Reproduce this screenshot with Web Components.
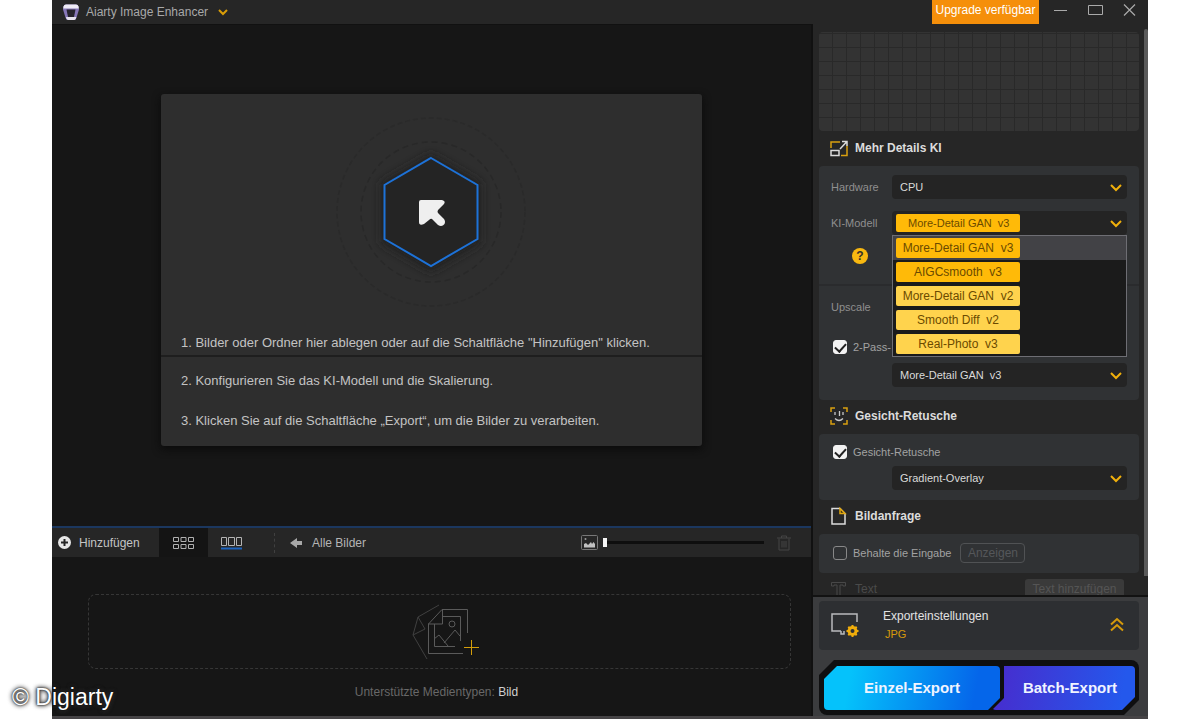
<!DOCTYPE html>
<html lang="de">
<head>
<meta charset="utf-8">
<title>Aiarty Image Enhancer</title>
<style>
  html, body { margin: 0; height: 100%; background: #fff; }
  body { font: 12px/16px "Liberation Sans", Arial, sans-serif; color: #b9b9b9; position: relative; overflow: hidden; }
</style>
</head>
<body>
<app-window></app-window>
<photo-credit>© Digiarty</photo-credit>

<script>
const define = (name, html, setup) => {
  const template = document.createElement('template');
  template.innerHTML = `<style>:host,*{box-sizing:border-box}button,select,input{font:inherit;color:inherit}button{border:0;background:none;padding:0;margin:0}svg{display:block;flex:none}</style>` + html;
  customElements.define(name, class extends HTMLElement {
    constructor() {
      super();
      this.attachShadow({ mode: 'open' }).appendChild(template.content.cloneNode(true));
    }
    connectedCallback() { if (setup) setup(this, this.shadowRoot); }
  });
};

define('photo-credit', `
<style>
  :host { position: absolute; left: 12px; bottom: 8px; font-size: 23px; line-height: 28px; color: #fff;
    text-shadow: 0 0 2px #000, 0 0 4px #222, 0 0 5px #444; }
</style><slot></slot>`);

/* Title bar */
define('title-bar', `
<style>
  :host { display: flex; align-items: center; height: 24px; padding: 0 12px 0 10px; background: #262626; }
  .logo { margin-right: 6px; }
  h1 { margin: 0 10px 0 0; font-size: 12px; font-weight: 400; color: #a9a9a9; }
  .up { margin-left: auto; height: 24px; width: 107px; padding-bottom: 4px; background: #f58f0a; color: #fff; white-space: nowrap; }
  .win { display: flex; gap: 20px; margin-left: 14px; align-items: center; padding-bottom: 4px; }
  .win button { height: 16px; }
</style>
<svg class="logo" width="18" height="18" viewBox="0 0 18 18">
  <path d="M4 1.500h10q2 0 2.500 2l.5 3-2.500 8q-.5 2.500-2.500 2.500H6q-2 0-2.500-2.500L1 6.500l.5-3Q2 1.500 4 1.500z" fill="#8676b8"/>
  <path d="M4 1.500h10q2 0 2.500 2l.3 2H1.200l.3-2Q2 1.500 4 1.500z" fill="#efebf6"/>
  <path d="M4 14h10.300q-.4 3-2.300 3H6q-1.600 0-2-3z" fill="#e6e2ef"/>
  <path d="M4.500 6.500h9L12 14H6z" fill="#26232e"/>
</svg>
<h1>Aiarty Image Enhancer</h1>
<button aria-label="Menü"><svg width="10" height="7" viewBox="0 0 10 7"><path d="M1 1l4 4 4-4" fill="none" stroke="#d99d08" stroke-width="2"/></svg></button>
<button class="up">Upgrade verfügbar</button>
<div class="win">
  <button aria-label="Minimieren"><svg width="15" height="16"><path d="M1 8.500h13" stroke="#aaa"/></svg></button>
  <button aria-label="Maximieren"><svg width="15" height="16"><path d="M.5 3.500h14v9H.5z" fill="none" stroke="#aaa"/></svg></button>
  <button aria-label="Schließen"><svg width="13" height="16"><path d="M1 2.500l11 11M12 2.500l-11 11" stroke="#aaa" stroke-width="1.200"/></svg></button>
</div>`);

/* Drop area with the three steps */
define('drop-stage', `
<style>
  :host { display: flex; justify-content: center; align-items: flex-start; flex: 1; min-height: 0; padding: 69px 16px 0; background: #161616; }
  section { width: 541px; max-width: 100%; border-radius: 3px; background: #2e2e2e; box-shadow: 0 3px 8px #0a0a0a; color: #c3c3c3; font-size: 13px; }
  .drop { padding: 18px 0 4px; border-bottom: 2px solid #1e1e1e; }
  .drop svg { margin: 0 auto 23px; }
  p { margin: 0; padding: 0 20px; }
  .steps { display: grid; gap: 24px; padding: 16px 0 17px; }
</style>
<section>
  <div class="drop">
    <svg width="200" height="200" viewBox="0 0 200 200">
      <defs><filter id="s" x="-30%" y="-30%" width="160%" height="160%"><feGaussianBlur stdDeviation="5"/></filter></defs>
      <circle cx="99" cy="100" r="94" fill="none" stroke="#2a2a2a" stroke-width="1.500" stroke-dasharray="5 3"/>
      <circle cx="99" cy="100" r="70" fill="none" stroke="#282828" stroke-width="1.500" stroke-dasharray="6 4"/>
      <path d="M99 42l50 29v60l-50 29-50-29V71z" fill="#202020" filter="url(#s)"/>
      <path d="M99 46l46.500 27v54L99 154l-46.500-27V73z" fill="#242424" stroke="#1d72d8" stroke-width="2"/>
      <path d="M89 88h21q4 1 2 4l-6 6q-1 2 0 3l6 6c3 4-1 9-6 6l-6-6q-1-1-3 1l-5 4q-5 2-5-2V90q0-2 2-2z" fill="#efefef"/>
    </svg>
    <p>1. Bilder oder Ordner hier ablegen oder auf die Schaltfläche "Hinzufügen" klicken.</p>
  </div>
  <div class="steps">
    <p>2. Konfigurieren Sie das KI-Modell und die Skalierung.</p>
    <p>3. Klicken Sie auf die Schaltfläche „Export“, um die Bilder zu verarbeiten.</p>
  </div>
</section>`);

/* Toolbar over the film strip */
define('strip-toolbar', `
<style>
  :host { display: flex; align-items: stretch; height: 31px; flex: none; border-top: 2px solid #1b375f; background: #262626; padding-right: 20px; color: #b5b5b5; }
  button { display: flex; align-items: center; }
  .add { gap: 8px; width: 107px; padding-left: 6px; color: #c4c4c4; border-radius: 0 0 6px 0; }
  .tab { width: 49px; justify-content: center; background: #141414; }
  .strip { margin-left: 13px; }
  .dots { align-self: center; height: 20px; margin: 0 15px 0 32px; border-left: 1px dashed #404040; }
  .all { gap: 9px; }
  .zoom { display: flex; align-items: center; gap: 5px; margin-left: auto; }
  input { appearance: none; width: 161px; height: 12px; margin: 0; background: linear-gradient(#0e0e0e, #0e0e0e) center / 100% 3px no-repeat; }
  input::-webkit-slider-thumb { appearance: none; width: 4px; height: 9px; background: #f4f4f4; }
  .del { margin-left: 13px; }
</style>
<button class="add"><svg width="13" height="13" viewBox="0 0 13 13"><circle cx="6.500" cy="6.500" r="6.500" fill="#e8e8e8"/><path d="M6.500 3v7M3 6.500h7" stroke="#262626" stroke-width="2"/></svg>Hinzufügen</button>
<button class="tab" aria-label="Raster"><svg width="21" height="12" viewBox="0 0 21 12"><path d="M.5.5h5v4h-5zM8 .5h5v4H8zM15.500.5h5v4h-5zM.5 7.500h5v4h-5zM8 7.500h5v4H8zM15.500 7.500h5v4h-5z" fill="none" stroke="#b0b0b0"/></svg></button>
<button class="strip" aria-label="Filmstreifen"><svg width="21" height="14" viewBox="0 0 21 14"><path d="M.5 1.500h5v8h-5zM7.500 1.500h6v8h-6zM15.500 1.500h5v8h-5z" fill="none" stroke="#b4b4b4"/><path d="M0 12.500h21" stroke="#1c63bd" stroke-width="2"/></svg></button>
<span class="dots"></span>
<button class="all"><svg width="13" height="12" viewBox="0 0 13 12"><path d="M0 6l7-5v3h5v4H7v3z" fill="#a8a8a8"/></svg>Alle Bilder</button>
<div class="zoom">
  <svg width="17" height="15" viewBox="0 0 17 15"><rect x=".5" y=".5" width="16" height="14" rx="1" fill="none" stroke="#777"/><path d="M3 12.500V9l2-1 2 2 3-3 1 2 1.500-2L14 9v3.500z" fill="#c0c0c0"/><circle cx="4.500" cy="4" r="1" fill="#999"/></svg>
  <input type="range" min="0" max="100" value="0" aria-label="Vorschaugröße">
</div>
<button class="del" aria-label="Löschen"><svg width="14" height="16" viewBox="0 0 14 16"><path d="M0 3h14M4.500 3V1h5v2M2 3.500V15h10V3.500M5 6v6.500M7 6v6.500M9 6v6.500" fill="none" stroke="#444"/></svg></button>`);

/* Empty film strip */
define('film-strip', `
<style>
  :host { display: block; height: 159px; flex: none; padding: 37px 20px 0 36px; background: #161616; }
  .box { display: flex; height: 75px; align-items: center; justify-content: center; padding-left: 10px; border: 1px dashed #363636; border-radius: 8px; }
  p { margin: 15px 0 0; padding-right: 6px; text-align: center; color: #686868; }
  b { font-weight: 400; color: #cfcfcf; }
</style>
<div class="box">
  <svg width="68" height="56" viewBox="0 0 68 56" fill="none" stroke="#5a5a5a">
    <path d="M28 1L7 13 2 31l14 24M7 13l7 12L2 31" stroke="#404040"/>
    <path d="M56.500 29V5.500H31L17.500 20v29.500H52"/><path d="M31.500 5v15H17M32 12.500h17.500V37M23.500 20v22.500H44M23 35l5-4 9 11M33 39l11-13 5 6"/><circle cx="41" cy="20" r="3"/>
    <path d="M60.500 36v15M53 43.500h15" stroke="#d49e0a"/>
  </svg>
</div>
<p>Unterstützte Medientypen: <b>Bild</b></p>`);

/* Section heading with an icon slot */
define('panel-heading', `
<style>
  :host { display: flex; align-items: center; height: 34px; padding: 0 15px 2px 11px; gap: 7px; color: #dcdcdc; }
  h2 { margin: 0; font-size: 12px; line-height: 16px; flex: 1; }
  :host([muted]) { color: #4a4a4a; } :host([muted]) h2 { font-weight: 400; }
  ::slotted(svg) { display: block; flex: none; }
</style>
<slot name="icon"></slot><h2><slot></slot></h2><slot name="end"></slot>`);

define('panel-card', `
<style>
  :host { display: flex; flex-direction: column; background: #303234; border-radius: 4px; padding: 9px 12px; font-size: 11px; }
</style><slot></slot>`);

/* Labelled drop-down; "tag" draws the value as a yellow chip */
define('select-field', `
<style>
  :host { display: grid; grid-template-columns: 61px minmax(0, 1fr); align-items: center; height: 24px; flex: none; font-size: 11px; color: #8f8f8f; position: relative; }
  .field { grid-column: 2; position: relative; height: 24px; border-radius: 4px; background: #242424; color: #dadada; }
  select { appearance: none; display: block; width: 100%; height: 24px; margin: 0; padding: 0 24px 0 8px; border: 0; background: none; position: relative; }
  .field > svg { position: absolute; right: 5px; top: 9px; pointer-events: none; }
  :host([tag]) .field::before { content: ""; position: absolute; left: 4px; top: 3px; width: 124px; height: 18px; border-radius: 2px; background: #ffba08; }
  :host([tag]) select { color: #6b4a00; padding-left: 16px; }
</style>
<label for="s"></label>
<div class="field"><select id="s"></select>
<svg width="12" height="8" viewBox="0 0 12 8"><path d="M1 1l5 5 5-5" fill="none" stroke="#f0b00c" stroke-width="2"/></svg></div>
<slot></slot>`, (host, root) => {
  const label = root.querySelector('label'), select = root.querySelector('select');
  label.textContent = host.getAttribute('label') || '';
  if (!label.textContent) select.setAttribute('aria-label', host.getAttribute('name'));
  select.replaceChildren(new Option(host.getAttribute('value').replace('  ', '\u00a0\u00a0')));
});

/* Open list of models */
define('model-menu', `
<style>
  :host { position: absolute; z-index: 2; top: 24px; left: 61px; right: 0; display: block; border: 1px solid #6e6e74; background: #1b1b1b; font-size: 12px; }
  [role=option] { display: block; width: 100%; height: 24px; padding: 1px 3px 2px; text-align: left; }
  [aria-selected=true] { background: #424246; }
  span { display: block; width: 124px; height: 20px; line-height: 20px; border-radius: 2px; background: #ffba08; color: #6b4a00; text-align: center; white-space: pre; }
  .soft { background: #ffd34d; }
</style>
<div role="listbox" aria-label="KI-Modell">
  <button role="option" aria-selected="true"><span>More-Detail GAN  v3</span></button>
  <button role="option"><span>AIGCsmooth  v3</span></button>
  <button role="option"><span class="soft">More-Detail GAN  v2</span></button>
  <button role="option"><span class="soft">Smooth Diff  v2</span></button>
  <button role="option"><span class="soft">Real-Photo  v3</span></button>
</div>`);

define('check-field', `
<style>
  :host { display: flex; align-items: center; font-size: 11px; color: #a2a2a2; height: 24px; flex: none; padding-left: 2px; }
  label { display: flex; align-items: center; gap: 6px; white-space: nowrap; }
  input { appearance: none; position: relative; width: 14px; height: 14px; margin: 0; border: 1px solid #888; border-radius: 3px; }
  input:checked { background: #f2f2f2; border-color: #f2f2f2; }
  input:checked::after { content: ""; position: absolute; left: 3px; top: 0; width: 5px; height: 9px; border: solid #222; border-width: 0 2px 2px 0; transform: rotate(42deg); }
</style>
<label><input type="checkbox"><slot></slot></label>`, (host, root) => {
  root.querySelector('input').checked = host.hasAttribute('checked');
});

/* Settings column */
define('settings-panel', `
<style>
  :host { display: flex; flex: 1; min-height: 0; overflow: hidden; background: #262626; }
  .content { flex: 1; min-width: 0; padding: 8px 5px 0 6px; }
  .preview { height: 99px; margin-bottom: 1px; border-radius: 4px; background-color: #333;
    background-image: linear-gradient(90deg, #292929 1px, transparent 1px), linear-gradient(#292929 1px, transparent 1px);
    background-size: 14px 14px; background-position: -1px 1px; }
  .bar { width: 4px; margin-top: 5px; margin-bottom: 19px; background: #5a5a5a; border-radius: 2px 2px 0 0; }
  .help { align-self: flex-start; margin: 13px 0 0 21px; width: 16px; height: 16px; border-radius: 50%; background: #f8b810; color: #33302a; font-weight: 700; font-size: 12px; line-height: 16px; }
  .line { height: 2px; margin: 20px -12px 9px; background: #2a2b2d; }
  .label { line-height: 24px; color: #8f8f8f; }
  .gap { margin-top: 12px; }
  .pass { margin-top: 16px; }
  .second { margin-top: 4px; }
  .keep { display: flex; align-items: center; gap: 9px; }
  .keep button { width: 65px; height: 20px; border: 1px solid #505254; border-radius: 4px; color: #55575a; font-size: 12px; }
  .first { height: 234px; } .face { height: 66px; padding-top: 6px; } .query { height: 39px; padding-top: 7px; }
  .mode { margin-top: 2px; }
  .text { width: 99px; height: 20px; border-radius: 3px; background: #3a3a3a; color: #555; font-size: 12px; }
</style>
<div class="content">
  <div class="preview"></div>
  <panel-heading>
    <svg slot="icon" width="18" height="17" viewBox="0 0 18 17" fill="none"><path d="M1 8V2h9M17 6v9.500h-6" stroke="#d9a010" stroke-width="1.500"/><path d="M1 10.500h8v5H1zM10 9l6.500-7M12 1.500h5v4.500" stroke="#dcdcdc" stroke-width="1.500"/></svg>
    Mehr Details KI
  </panel-heading>
  <panel-card class="first">
    <select-field label="Hardware" value="CPU"></select-field>
    <select-field class="gap" label="KI-Modell" value="More-Detail GAN  v3" tag><model-menu></model-menu></select-field>
    <button class="help" aria-label="Hilfe">?</button>
    <div class="line"></div>
    <span class="label">Upscale</span>
    <check-field class="pass" checked>2-Pass-</check-field>
    <select-field class="second" name="Modell für zweiten Durchlauf" value="More-Detail GAN  v3"></select-field>
  </panel-card>
  <panel-heading>
    <svg slot="icon" width="18" height="18" viewBox="0 0 18 18" fill="none"><path d="M1 5V1h4M13 1h4v4M1 13v4h4M13 17h4v-4" stroke="#d9a010" stroke-width="1.500"/><path d="M5 5v3M9.500 4v5M13 5v3M5 11.500q4 4 8 0" stroke="#c8c8c8" stroke-width="1.300"/></svg>
    Gesicht-Retusche
  </panel-heading>
  <panel-card class="face">
    <check-field checked>Gesicht-Retusche</check-field>
    <select-field class="mode" name="Retusche-Modus" value="Gradient-Overlay"></select-field>
  </panel-card>
  <panel-heading>
    <svg slot="icon" width="18" height="18" viewBox="0 0 18 18" fill="none"><path d="M2 1.500h8l5 5v10.500H2z" stroke="#dcdcdc" stroke-width="1.500"/><path d="M10 1.500v5h5z" fill="#332b12" stroke="#e0a610" stroke-width="1.500"/></svg>
    Bildanfrage
  </panel-heading>
  <panel-card class="query">
    <div class="keep"><check-field>Behalte die Eingabe</check-field><button>Anzeigen</button></div>
  </panel-card>
  <panel-heading muted>
    <svg slot="icon" width="18" height="17" viewBox="0 0 18 17" fill="none"><path d="M1.500 5V1.500h14V5h-2.500V4h-3v12H7V4H4v1z" stroke="#484848"/></svg>
    Text
    <button slot="end" class="text">Text hinzufügen</button>
  </panel-heading>
</div>
<div class="bar"></div>`);

/* Export footer */
define('export-footer', `
<style>
  :host { display: block; height: 121px; flex: none; padding: 4px 9px 0 6px; border-top: 2px solid #121212; background: #3b3c3e; }
  .card { display: flex; align-items: center; width: 100%; height: 49px; padding: 0 14px 2px 12px; border-radius: 4px; background: #2d2f32; text-align: left; }
  .t { flex: 1; padding-left: 24px; color: #e2e2e2; line-height: 18px; font-size: 12px; }
  .t small { display: block; padding-left: 2px; font-size: 11px; color: #d59a0b; }
  .frame { display: grid; grid-template-columns: 176fr 135fr; height: 55px; margin-top: 10px; padding: 6px 4px 5px 5px; background: #0f0f10; border-radius: 8px;
    clip-path: polygon(15px 0, 100% 0, 100% calc(100% - 15px), calc(100% - 15px) 100%, 0 100%, 0 15px); }
  .frame button { height: 44px; font-size: 15px; font-weight: 700; color: #f0f4ff; border-radius: 4px; }
  .frame .one { background: linear-gradient(100deg, #05c2fb 15%, #0566ea 85%); clip-path: polygon(13px 0, 100% 0, 100% calc(100% - 12px), calc(100% - 12px) 100%, 0 100%, 0 13px); }
  .frame .many { margin-left: -8px; padding-left: 13px; background: linear-gradient(100deg, #4430d0 10%, #2458ec 90%); clip-path: polygon(12px 0, 100% 0, 100% calc(100% - 13px), calc(100% - 13px) 100%, 0 100%, 12px calc(100% - 12px)); }
</style>
<button class="card">
  <svg width="28" height="26" viewBox="0 0 28 26" fill="none"><path d="M26 10V2H1v17h9M10 19v3h3v-3" stroke="#b9bbbd" stroke-width="1.500"/><circle cx="21.500" cy="19" r="3.500" stroke="#f0ad0b" stroke-width="3"/><path d="M21.500 13v12M15.500 19h12M17.300 14.800l8.400 8.400M25.700 14.800l-8.400 8.400" stroke="#f0ad0b" stroke-width="2"/><circle cx="21.500" cy="19" r="2" fill="#2d2f32"/></svg>
  <span class="t">Exporteinstellungen<small>JPG</small></span>
  <svg width="16" height="16" viewBox="0 0 16 16"><path d="M2 7.500L8 2l6 5.500M2 13.500L8 8l6 5.500" fill="none" stroke="#d59a0b" stroke-width="2"/></svg>
</button>
<div class="frame"><button class="one">Einzel-Export</button><button class="many">Batch-Export</button></div>`);

define('app-window', `
<style>
  :host { display: flex; flex-direction: column; height: 100vh; margin: 0 53px 0 52px; border-bottom: 3px solid #464446; background: #161616; }
  main { flex: 1; display: flex; min-height: 0; }
  .left { flex: 1; min-width: 0; display: flex; flex-direction: column; border-top: 1px solid #111; }
  aside { width: 337px; display: flex; flex-direction: column; border-left: 2px solid #111; }
</style>
<title-bar></title-bar>
<main>
  <div class="left"><drop-stage></drop-stage><strip-toolbar></strip-toolbar><film-strip></film-strip></div>
  <aside><settings-panel></settings-panel><export-footer></export-footer></aside>
</main>`);
</script>
</body>
</html>
